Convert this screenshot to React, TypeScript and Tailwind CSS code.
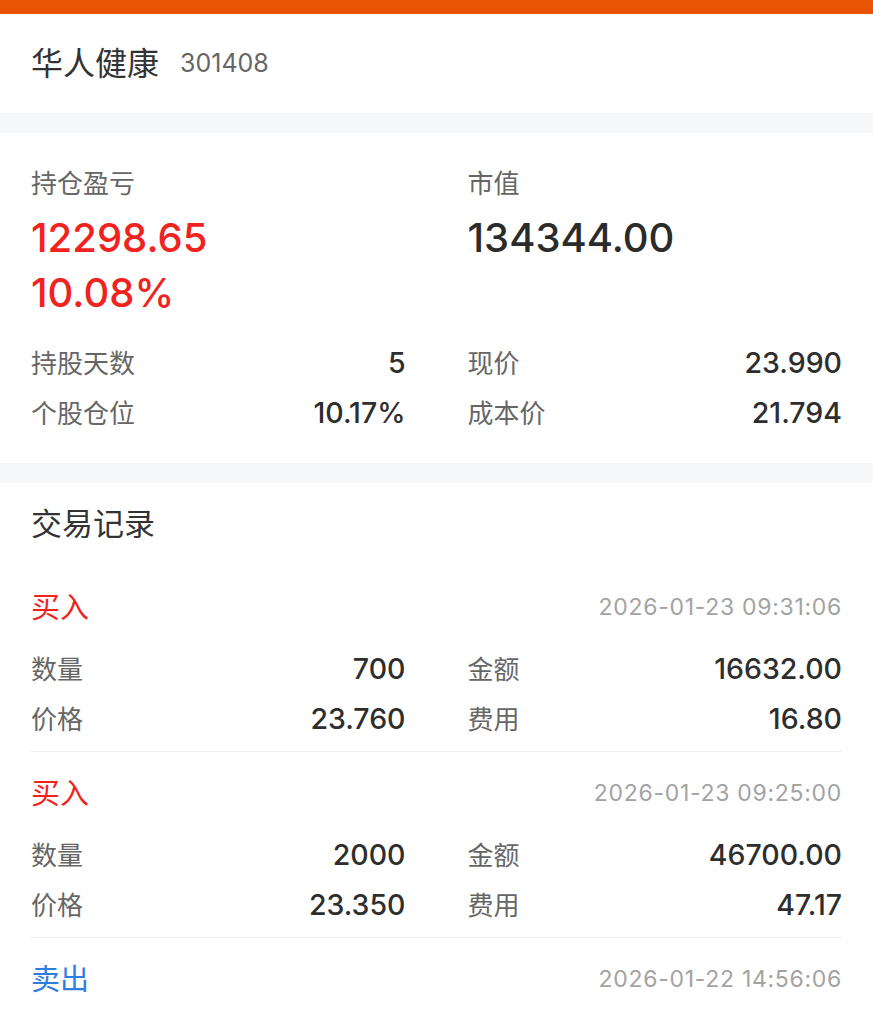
import React from "react";

const FONT = { fontFamily: '"Inter", "Noto Sans CJK SC", sans-serif' };

function Row({ label, value }: { label: string; value: string }) {
  return (
    <div className="flex h-[50px] items-center justify-between">
      <span className="text-[26px] text-[#666666]">{label}</span>
      <span className="text-[28.5px] font-medium text-[#2e2e2e]">{value}</span>
    </div>
  );
}

type Rec = {
  type: "buy" | "sell";
  time: string;
  qty?: string;
  amount?: string;
  price?: string;
  fee?: string;
};

const records: Rec[] = [
  { type: "buy", time: "2026-01-23 09:31:06", qty: "700", amount: "16632.00", price: "23.760", fee: "16.80" },
  { type: "buy", time: "2026-01-23 09:25:00", qty: "2000", amount: "46700.00", price: "23.350", fee: "47.17" },
  { type: "sell", time: "2026-01-22 14:56:06" },
];

export default function App() {
  return (
    <div className="flex min-h-[1024px] w-[873px] flex-col bg-[#f5f7f9]" style={FONT}>
      <div className="h-[14px] bg-[#e95504]" />
      <div className="flex h-[99px] items-center bg-white px-[31px]">
        <span className="text-[32px] text-[#333333]">华人健康</span>
        <span className="ml-[21px] text-[25px] text-[#666666]">301408</span>
      </div>

      <div className="mt-[20px] bg-white px-[31px] pt-[23px] pb-[25px]">
        <div className="grid grid-cols-2 gap-x-[62px]">
          <div>
            <div className="flex h-[54px] items-center text-[26px] text-[#666666]">持仓盈亏</div>
            <div className="flex h-[55px] items-center text-[40px] font-medium text-[#f0231f]">12298.65</div>
            <div className="flex h-[55px] items-center text-[40px] font-medium text-[#f0231f]">10.08%</div>
          </div>
          <div>
            <div className="flex h-[54px] items-center text-[26px] text-[#666666]">市值</div>
            <div className="flex h-[55px] items-center text-[40px] font-medium text-[#2b2b2b]">134344.00</div>
          </div>
        </div>
        <div className="mt-[18px] grid grid-cols-2 gap-x-[62px]">
          <Row label="持股天数" value="5" />
          <Row label="现价" value="23.990" />
          <Row label="个股仓位" value="10.17%" />
          <Row label="成本价" value="21.794" />
        </div>
      </div>

      <div className="mt-[20px] flex-1 bg-white px-[31px]">
        <div className="flex h-[83px] items-center text-[31px] text-[#333333]">交易记录</div>
        {records.map((r, i) => (
          <div key={i} className={i > 0 ? "border-t border-[#eeeeee]" : ""}>
            <div className="flex h-[78px] items-center justify-between pt-[5px]">
              <span className={`text-[29px] ${r.type === "buy" ? "text-[#f0231f]" : "text-[#2f7de1]"}`}>
                {r.type === "buy" ? "买入" : "卖出"}
              </span>
              <span className="text-[23px] tracking-[0.7px] text-[#a3a3a3]">{r.time}</span>
            </div>
            {r.qty && (
              <div className="grid grid-cols-2 gap-x-[62px] pb-[7px]">
                <Row label="数量" value={r.qty} />
                <Row label="金额" value={r.amount ?? ""} />
                <Row label="价格" value={r.price ?? ""} />
                <Row label="费用" value={r.fee ?? ""} />
              </div>
            )}
          </div>
        ))}
      </div>
    </div>
  );
}
